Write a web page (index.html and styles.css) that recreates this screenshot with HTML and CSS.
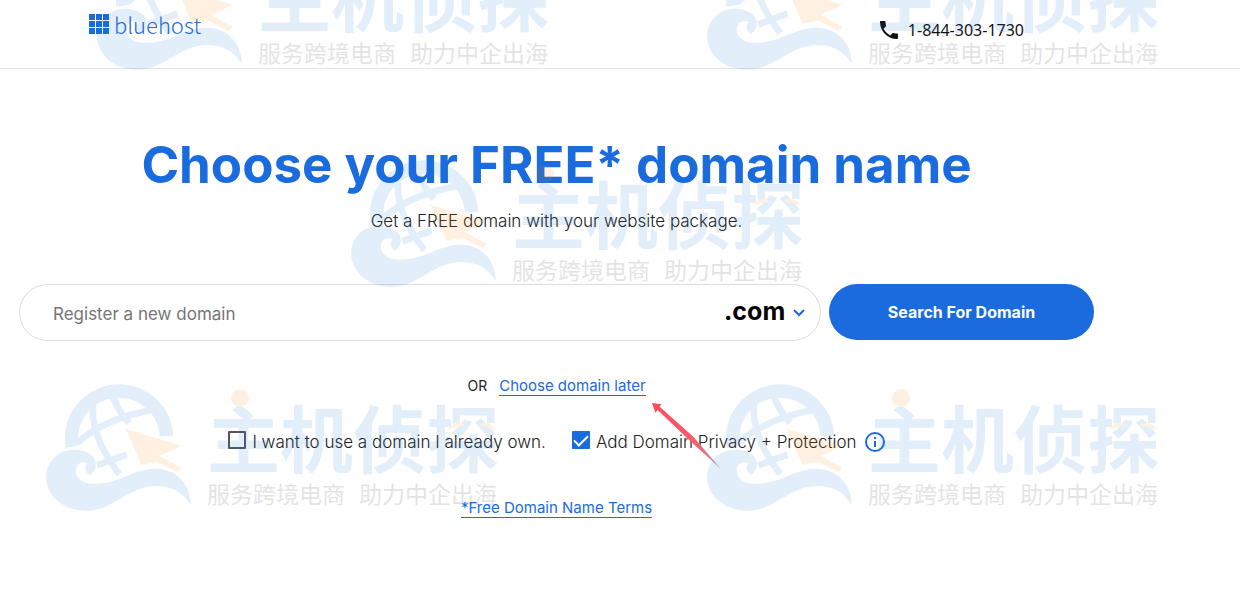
FILE: index.html
```html
<!DOCTYPE html>
<html lang="en">
<head>
    <meta charset="UTF-8">
    <meta name="viewport" content="width=device-width, initial-scale=1">
    <title>Bluehost</title>
    <link rel="stylesheet" href="styles.css">
</head>
<body>
    <header class="header">
        <a class="logo" href="#">
            <svg class="logo-grid" viewBox="0 0 20 20" aria-hidden="true">
                <path d="M0 0h6v6H0zM7 0h6v6H7zM14 0h6v6h-6zM0 7h6v6H0zM7 7h6v6H7zM14 7h6v6h-6zM0 14h6v6H0zM7 14h6v6H7zM14 14h6v6h-6z"/>
            </svg>
            bluehost
        </a>
        <a class="phone" href="tel:18443031730">
            <svg class="phone-icon" viewBox="3 3 18 18" aria-hidden="true">
                <path d="M6.62 10.79c1.44 2.83 3.76 5.14 6.59 6.59l2.2-2.2c.27-.27.67-.36 1.02-.24 1.12.37 2.33.57 3.57.57.55 0 1 .45 1 1V20c0 .55-.45 1-1 1C10.61 21 3 13.39 3 4c0-.55.45-1 1-1h3.500c.55 0 1 .45 1 1 0 1.250.2 2.450.57 3.570.11.35.03.74-.25 1.020z"/>
            </svg>
            1-844-303-1730
        </a>
    </header>

    <main class="main">
        <h1 class="title">Choose your FREE* domain name</h1>
        <p class="subtitle">Get a FREE domain with your website package.</p>

        <form class="search" id="searchForm">
            <div class="search-box">
                <input class="search-input" type="text" placeholder="Register a new domain" aria-label="Register a new domain">
                <div class="tld">
                    <select class="tld-select" aria-label="Domain extension">
                        <option>.com</option>
                    </select>
                    <svg class="tld-arrow" viewBox="0 0 12 8" aria-hidden="true"><path d="M1 1l5 5 5-5"/></svg>
                </div>
            </div>
            <button class="search-btn" type="submit">Search For Domain</button>
        </form>

        <div class="later">
            <span>OR</span>
            <a class="link" href="#">Choose domain later</a>
            <svg class="pointer" viewBox="0 0 207 198" aria-hidden="true">
                <defs>
                    <linearGradient id="fade" x1="0" y1="0" x2="1" y2="1">
                        <stop offset="0" stop-color="#fb4c5c"/>
                        <stop offset=".65" stop-color="#f55f70"/>
                        <stop offset="1" stop-color="#b9a3c0"/>
                    </linearGradient>
                </defs>
                <path fill="url(#fade)" d="M0 0l28 4-5 7 101 90 83 97-95-86L17 21l-7 8z"/>
            </svg>
        </div>

        <div class="options">
            <label class="option"><input type="checkbox" class="check"> I want to use a domain I already own.</label>
            <div class="privacy">
                <label class="option"><input type="checkbox" class="check" checked> Add Domain Privacy + Protection</label>
                <button class="info" type="button" aria-label="About domain privacy">
                    <svg viewBox="0 0 20 20" aria-hidden="true">
                        <circle cx="10" cy="10" r="9"/>
                        <path d="M10 9v6M10 5v2"/>
                    </svg>
                </button>
            </div>
        </div>

        <a class="link terms" href="#">*Free Domain Name Terms</a>
    </main>

    <svg class="defs" aria-hidden="true">
        <symbol id="emblem" viewBox="45 42 438 381">
            <g class="globe">
                <path stroke-width="40" d="M125 230A143 143 0 0 1 266 63A143 143 0 0 1 408 198"/>
                <path stroke-width="20" d="M188 96Q176 194 266 312M246 76Q262 122 296 158M140 218Q228 142 378 118M200 286L288 254"/>
            </g>
            <path class="orange" d="M286 177L452 227 388 258 453 294 441 306 380 275 333 284z"/>
            <path class="wave-gap" d="M128 239C168 240 200 262 190 306M260 340C300 306 340 296 374 296"/>
            <path class="blue" d="M128 239C80 240 47 278 47 322C48 380 100 422 168 422C250 422 292 348 378 348C426 348 458 368 481 405C480 340 436 296 374 296C306 296 268 344 184 341C150 339 132 318 136 296C140 278 156 272 172 280C160 290 166 312 180 314C198 302 202 274 186 258C170 244 150 239 128 239z"/>
        </symbol>
        <symbol id="eyes" viewBox="0 0 48 10">
            <path class="orange" d="M0 8Q8-4 18 4Q9 4 0 8zM48 8Q40-4 30 4Q39 4 48 8z"/>
        </symbol>
    </svg>

    <div class="watermarks" aria-hidden="true">
        <div class="mark mark-1">
            <svg class="emblem"><use href="#emblem"/></svg>
            <div class="mark-text"><b>主机侦探</b><p><span>服务跨境电商</span><span>助力中企出海</span></p><svg class="eyes"><use href="#eyes"/></svg></div>
        </div>
        <div class="mark mark-2">
            <svg class="emblem"><use href="#emblem"/></svg>
            <div class="mark-text"><b>主机侦探</b><p><span>服务跨境电商</span><span>助力中企出海</span></p><svg class="eyes"><use href="#eyes"/></svg></div>
        </div>
        <div class="mark mark-3">
            <svg class="emblem"><use href="#emblem"/></svg>
            <div class="mark-text"><b>主机侦探</b><p><span>服务跨境电商</span><span>助力中企出海</span></p><svg class="eyes"><use href="#eyes"/></svg></div>
        </div>
        <div class="mark mark-4">
            <svg class="emblem"><use href="#emblem"/></svg>
            <div class="mark-text"><b>主机侦探</b><p><span>服务跨境电商</span><span>助力中企出海</span></p><svg class="eyes"><use href="#eyes"/></svg></div>
        </div>
        <div class="mark mark-5">
            <svg class="emblem"><use href="#emblem"/></svg>
            <div class="mark-text"><b>主机侦探</b><p><span>服务跨境电商</span><span>助力中企出海</span></p><svg class="eyes"><use href="#eyes"/></svg></div>
        </div>
    </div>

    <script>
        document.getElementById('searchForm').addEventListener('submit', e => e.preventDefault());
    </script>
</body>
</html>
```
FILE: styles.css
```css
* {
    box-sizing: border-box;
}
body {
    position: relative;
    min-height: 100vh;
    margin: 0;
    overflow-x: hidden;
    background: white;
    color: #222;
    font-family: Inter, "Liberation Sans", sans-serif;
    font-size: 17px;
}
.header {
    display: flex;
    justify-content: space-between;
    align-items: flex-start;
    padding: 11px 216px 11px 89px;
    height: 69px;
    border-bottom: 1px solid #e4e4e4;
}
.logo {
    display: flex;
    align-items: center;
    gap: 5px;
    color: #196bde;
    font-family: "Noto Sans CJK SC", sans-serif;
    font-size: 22px;
    font-weight: 300;
    line-height: 26px;
    text-decoration: none;
}
.logo-grid {
    width: 20px;
    height: 20px;
    fill: #196bde;
}
.phone {
    display: flex;
    align-items: center;
    gap: 10px;
    margin-top: 7px;
    color: #111;
    font-family: "Noto Sans", sans-serif;
    font-size: 16px;
    line-height: 24px;
    text-decoration: none;
}
.phone-icon {
    width: 18px;
    height: 18px;
    fill: #111;
}
.main {
    display: flex;
    flex-direction: column;
    align-items: center;
    padding: 64px 146px 64px 19px;
}
.title {
    margin: 0;
    color: #196bde;
    font-size: 51px;
    font-weight: 700;
    line-height: 64px;
}
.subtitle {
    margin: 12px 0 51px;
    font-weight: 300;
    line-height: 24px;
}
.search {
    display: flex;
    align-items: flex-start;
    gap: 8px;
    width: 100%;
}
.search-box {
    display: flex;
    flex: 1;
    align-items: center;
    height: 57px;
    padding: 0 14px 0 33px;
    border: 1px solid #dcdcdc;
    border-radius: 29px;
}
.search-input {
    flex: 1;
    min-width: 0;
    padding: 3px 0 0;
    border: none;
    outline: none;
    background: none;
    font: inherit;
}
.search-input::placeholder {
    color: #757575;
}
.tld {
    position: relative;
}
.tld-select {
    padding: 0 20px 4px 0;
    border: none;
    background: none;
    appearance: none;
    color: black;
    font: 700 25px Inter, sans-serif;
}
.tld-arrow {
    position: absolute;
    right: 1px;
    top: 13px;
    width: 12px;
    height: 8px;
    fill: none;
    stroke: #196bde;
    stroke-width: 2;
    pointer-events: none;
}
.search-btn {
    width: 265px;
    height: 56px;
    border: none;
    border-radius: 28px;
    background: #196bde;
    color: white;
    font: 700 16px Inter, sans-serif;
    cursor: pointer;
}
.later {
    position: relative;
    display: flex;
    align-items: baseline;
    gap: 12px;
    margin-top: 35px;
    font-size: 14px;
}
.link {
    border-bottom: 1px solid #196bde;
    color: #196bde;
    font-size: 15px;
    line-height: 19px;
    text-decoration: none;
}
.pointer {
    position: absolute;
    left: 100%;
    top: 100%;
    width: 69px;
    height: 66px;
    margin: 7px 0 0 6px;
}
.options {
    display: flex;
    align-items: center;
    gap: 26px;
    margin-top: 34px;
    line-height: 24px;
}
.option {
    display: flex;
    align-items: center;
    gap: 6px;
    font-weight: 300;
}
.check {
    width: 18px;
    height: 18px;
    margin: 0 0 4px;
    border: 2px solid #555;
    border-radius: 1px;
    appearance: none;
}
.check:checked {
    display: grid;
    place-items: center;
    border-color: #196bde;
    background: #196bde;
}
.check:checked::before {
    content: "";
    width: 12px;
    height: 6px;
    margin-top: -3px;
    border: solid white;
    border-width: 0 0 2px 2px;
    transform: rotate(-45deg);
}
.privacy {
    display: flex;
    align-items: center;
    gap: 8px;
}
.info {
    width: 20px;
    height: 20px;
    padding: 0;
    border: none;
    background: none;
    cursor: pointer;
}
.info svg {
    display: block;
    fill: none;
    stroke: #196bde;
    stroke-width: 2;
}
.terms {
    margin-top: 44px;
}
.defs {
    position: absolute;
    width: 0;
    height: 0;
}
.globe {
    fill: none;
    stroke: #1a78d0;
}
.wave-gap {
    fill: none;
    stroke: white;
    stroke-width: 14;
}
.blue {
    fill: #1a78d0;
}
.orange {
    fill: #ff8a10;
}
/* stamped over the page */
.watermarks {
    position: absolute;
    inset: 0;
    overflow: hidden;
    pointer-events: none;
}
.mark {
    position: absolute;
    display: flex;
    gap: 15px;
    opacity: .12;
    font-family: "Noto Sans CJK SC", sans-serif;
}
.mark-1 { left: 96px; top: -57px; }
.mark-2 { left: 706px; top: -57px; }
.mark-3 { left: 350px; top: 160px; }
.mark-4 { left: 45px; top: 384px; }
.mark-5 { left: 706px; top: 384px; }
.emblem {
    width: 147px;
    height: 127px;
}
.mark-text {
    position: relative;
    padding-top: 13px;
    white-space: nowrap;
}
.mark-text::before {
    content: "";
    position: absolute;
    left: 24px;
    top: 5px;
    width: 18px;
    height: 18px;
    border-radius: 50%;
    background: #ff8a10;
}
.mark-text b {
    display: block;
    color: #1a78d0;
    font-size: 73px;
    font-weight: 700;
    line-height: 76px;
}
.mark-text p {
    display: flex;
    gap: 14px;
    margin: 4px 0 0;
    color: #222;
    font-size: 23px;
    line-height: 32px;
}
.eyes {
    position: absolute;
    left: 241px;
    top: 38px;
    width: 48px;
    height: 10px;
}
```
